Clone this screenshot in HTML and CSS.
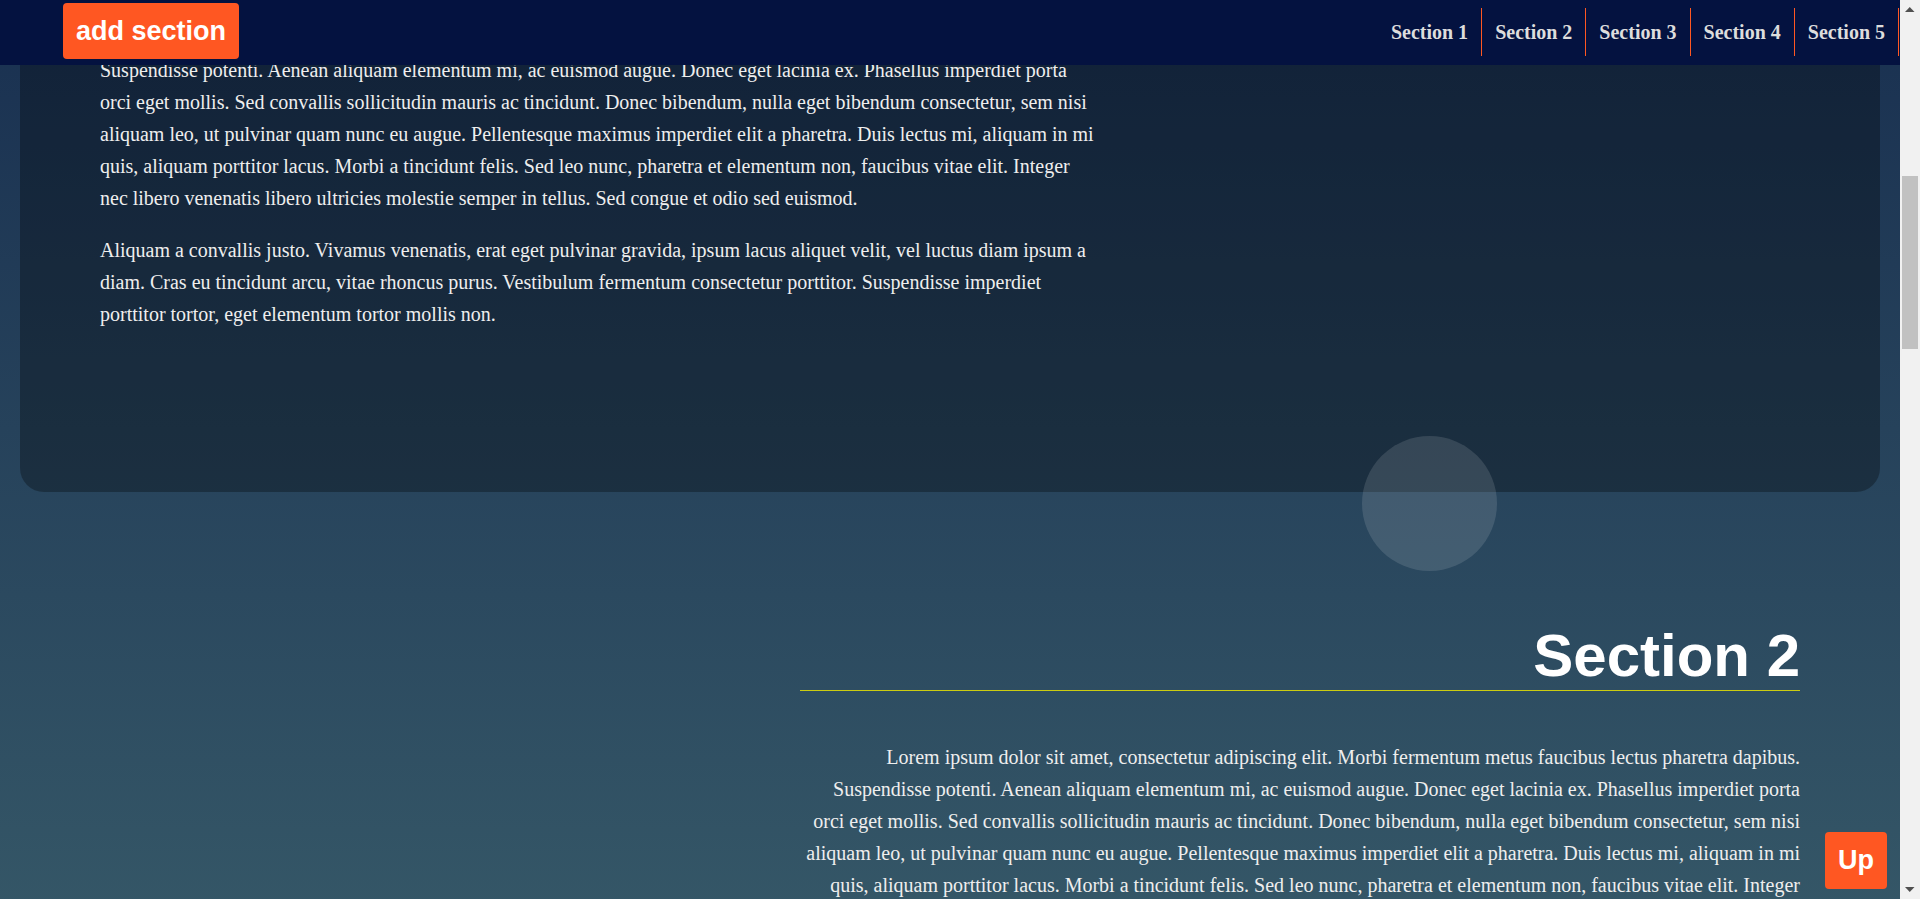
FILE: index.html
```html
<!DOCTYPE html>
<html lang="en">
<head>
<meta charset="utf-8">
<title>Landing Page</title>
<link rel="stylesheet" href="styles.css">
</head>
<body>
<header class="page-header">
  <button class="add-btn" type="button">add section</button>
  <nav class="navbar">
    <ul class="nav-list">
      <li class="nav-item"><a class="menu-link" href="#section1">Section 1</a></li>
      <li class="nav-item"><a class="menu-link" href="#section2">Section 2</a></li>
      <li class="nav-item"><a class="menu-link" href="#section3">Section 3</a></li>
      <li class="nav-item"><a class="menu-link" href="#section4">Section 4</a></li>
      <li class="nav-item"><a class="menu-link" href="#section5">Section 5</a></li>
    </ul>
  </nav>
</header>
<main class="main">
  <header class="main-hero">
    <h1 class="hero-title">Landing Page</h1>
  </header>
  <section id="section1" class="section section-left section-active">
    <div class="landing-container">
      <h2 class="section-title">Section 1</h2>
      <p class="section-text">Lorem ipsum dolor sit amet, consectetur adipiscing elit. Morbi fermentum metus faucibus lectus pharetra dapibus. Suspendisse potenti. Aenean aliquam elementum mi, ac euismod augue. Donec eget lacinia ex. Phasellus imperdiet porta orci eget mollis. Sed convallis sollicitudin mauris ac tincidunt. Donec bibendum, nulla eget bibendum consectetur, sem nisi aliquam leo, ut pulvinar quam nunc eu augue. Pellentesque maximus imperdiet elit a pharetra. Duis lectus mi, aliquam in mi quis, aliquam porttitor lacus. Morbi a tincidunt felis. Sed leo nunc, pharetra et elementum non, faucibus vitae elit. Integer nec libero venenatis libero ultricies molestie semper in tellus. Sed congue et odio sed euismod.</p>
      <p class="section-text">Aliquam a convallis justo. Vivamus venenatis, erat eget pulvinar gravida, ipsum lacus aliquet velit, vel luctus diam ipsum a diam. Cras eu tincidunt arcu, vitae rhoncus purus. Vestibulum fermentum consectetur porttitor. Suspendisse imperdiet porttitor tortor, eget elementum tortor mollis non.</p>
    </div>
    <span class="bubble"></span>
  </section>
  <section id="section2" class="section section-right">
    <div class="landing-container">
      <h2 class="section-title">Section 2</h2>
      <p class="section-text">Lorem ipsum dolor sit amet, consectetur adipiscing elit. Morbi fermentum metus faucibus lectus pharetra dapibus. Suspendisse potenti. Aenean aliquam elementum mi, ac euismod augue. Donec eget lacinia ex. Phasellus imperdiet porta orci eget mollis. Sed convallis sollicitudin mauris ac tincidunt. Donec bibendum, nulla eget bibendum consectetur, sem nisi aliquam leo, ut pulvinar quam nunc eu augue. Pellentesque maximus imperdiet elit a pharetra. Duis lectus mi, aliquam in mi quis, aliquam porttitor lacus. Morbi a tincidunt felis. Sed leo nunc, pharetra et elementum non, faucibus vitae elit. Integer nec libero venenatis libero ultricies molestie semper in tellus. Sed congue et odio sed euismod.</p>
      <p class="section-text">Aliquam a convallis justo. Vivamus venenatis, erat eget pulvinar gravida, ipsum lacus aliquet velit, vel luctus diam ipsum a diam. Cras eu tincidunt arcu, vitae rhoncus purus. Vestibulum fermentum consectetur porttitor. Suspendisse imperdiet porttitor tortor, eget elementum tortor mollis non.</p>
    </div>
  </section>
  <section id="section3" class="section section-left">
    <div class="landing-container">
      <h2 class="section-title">Section 3</h2>
      <p class="section-text">Lorem ipsum dolor sit amet, consectetur adipiscing elit. Morbi fermentum metus faucibus lectus pharetra dapibus. Suspendisse potenti. Aenean aliquam elementum mi, ac euismod augue. Donec eget lacinia ex. Phasellus imperdiet porta orci eget mollis. Sed convallis sollicitudin mauris ac tincidunt. Donec bibendum, nulla eget bibendum consectetur, sem nisi aliquam leo, ut pulvinar quam nunc eu augue. Pellentesque maximus imperdiet elit a pharetra. Duis lectus mi, aliquam in mi quis, aliquam porttitor lacus. Morbi a tincidunt felis. Sed leo nunc, pharetra et elementum non, faucibus vitae elit. Integer nec libero venenatis libero ultricies molestie semper in tellus. Sed congue et odio sed euismod.</p>
      <p class="section-text">Aliquam a convallis justo. Vivamus venenatis, erat eget pulvinar gravida, ipsum lacus aliquet velit, vel luctus diam ipsum a diam. Cras eu tincidunt arcu, vitae rhoncus purus. Vestibulum fermentum consectetur porttitor. Suspendisse imperdiet porttitor tortor, eget elementum tortor mollis non.</p>
    </div>
  </section>
  <section id="section4" class="section section-right">
    <div class="landing-container">
      <h2 class="section-title">Section 4</h2>
      <p class="section-text">Lorem ipsum dolor sit amet, consectetur adipiscing elit. Morbi fermentum metus faucibus lectus pharetra dapibus. Suspendisse potenti. Aenean aliquam elementum mi, ac euismod augue. Donec eget lacinia ex. Phasellus imperdiet porta orci eget mollis. Sed convallis sollicitudin mauris ac tincidunt. Donec bibendum, nulla eget bibendum consectetur, sem nisi aliquam leo, ut pulvinar quam nunc eu augue. Pellentesque maximus imperdiet elit a pharetra. Duis lectus mi, aliquam in mi quis, aliquam porttitor lacus. Morbi a tincidunt felis. Sed leo nunc, pharetra et elementum non, faucibus vitae elit. Integer nec libero venenatis libero ultricies molestie semper in tellus. Sed congue et odio sed euismod.</p>
      <p class="section-text">Aliquam a convallis justo. Vivamus venenatis, erat eget pulvinar gravida, ipsum lacus aliquet velit, vel luctus diam ipsum a diam. Cras eu tincidunt arcu, vitae rhoncus purus. Vestibulum fermentum consectetur porttitor. Suspendisse imperdiet porttitor tortor, eget elementum tortor mollis non.</p>
    </div>
  </section>
  <section id="section5" class="section section-left">
    <div class="landing-container">
      <h2 class="section-title">Section 5</h2>
      <p class="section-text">Lorem ipsum dolor sit amet, consectetur adipiscing elit. Morbi fermentum metus faucibus lectus pharetra dapibus. Suspendisse potenti. Aenean aliquam elementum mi, ac euismod augue. Donec eget lacinia ex. Phasellus imperdiet porta orci eget mollis. Sed convallis sollicitudin mauris ac tincidunt. Donec bibendum, nulla eget bibendum consectetur, sem nisi aliquam leo, ut pulvinar quam nunc eu augue. Pellentesque maximus imperdiet elit a pharetra. Duis lectus mi, aliquam in mi quis, aliquam porttitor lacus. Morbi a tincidunt felis. Sed leo nunc, pharetra et elementum non, faucibus vitae elit. Integer nec libero venenatis libero ultricies molestie semper in tellus. Sed congue et odio sed euismod.</p>
      <p class="section-text">Aliquam a convallis justo. Vivamus venenatis, erat eget pulvinar gravida, ipsum lacus aliquet velit, vel luctus diam ipsum a diam. Cras eu tincidunt arcu, vitae rhoncus purus. Vestibulum fermentum consectetur porttitor. Suspendisse imperdiet porttitor tortor, eget elementum tortor mollis non.</p>
    </div>
  </section>
</main>
<footer class="page-footer">
  <p class="footer-text">&copy; Landing Page</p>
</footer>
<a class="up-btn" href="#">Up</a>
<div class="scrollbar" aria-hidden="true">
  <svg class="scroll-arrow" width="20" height="17" viewBox="0 0 20 17"><polygon points="5,12 14.5,12 9.75,7" fill="#505050"/></svg>
  <div class="scroll-track"><div class="scroll-thumb"></div></div>
  <svg class="scroll-arrow" width="20" height="17" viewBox="0 0 20 17"><polygon points="5,5 14.5,5 9.75,10" fill="#505050"/></svg>
</div>
<script src="script.js"></script>
</body>
</html>
```
FILE: styles.css
```css
html {
  scroll-behavior: auto;
}

body {
  margin: 0 20px 0 0;
  font-family: "Liberation Serif", "Times New Roman", serif;
  font-size: 20px;
  color: #fff;
  background: rgb(136, 203, 171);
  background: linear-gradient(0deg, rgba(136, 203, 171, 1) 0%, rgba(0, 13, 60, 1) 100%);
}

/* fixed top bar */
.page-header {
  position: fixed;
  top: 0;
  left: 0;
  right: 20px;
  height: 65px;
  padding: 0 1px 0 63px;
  background: #041240;
  display: flex;
  align-items: flex-start;
  justify-content: space-between;
  z-index: 5;
}

.add-btn {
  margin-top: 3px;
  padding: 12px 13px;
  border: 0;
  border-radius: 4px;
  background: #ff5722;
  color: #fff;
  font-family: "Liberation Sans", Arial, sans-serif;
  font-weight: bold;
  font-size: 27px;
  line-height: 32px;
  cursor: pointer;
}

.navbar {
  display: flex;
}

.nav-list {
  list-style: none;
  margin: 8px 0 0;
  padding: 0;
  display: flex;
}

.menu-link {
  display: block;
  height: 48px;
  line-height: 48px;
  padding: 0 13px;
  border-right: 1px solid #ff5722;
  color: #ddd;
  font-weight: bold;
  font-size: 20px;
  text-decoration: none;
}

/* page content */
.main {
  margin: 10vh 20px;
}

.main-hero {
  height: 508.6px;
  display: flex;
  align-items: center;
}

.hero-title {
  margin: 0 4rem;
  font-family: "Liberation Sans", Arial, sans-serif;
  font-size: 7em;
}

.section {
  position: relative;
  min-height: 80vh;
}

.section-active {
  background: rgba(0, 0, 0, 0.3);
  border-radius: 24px;
}

.landing-container {
  max-width: 1000px;
  padding: 80px;
}

.section-right .landing-container {
  margin-left: auto;
  text-align: right;
}

.section-title {
  margin: 0.83em 0;
  border-bottom: 1px solid #cc1;
  color: #fff;
  font-family: "Liberation Sans", Arial, sans-serif;
  font-weight: bold;
  font-size: 3em;
}

.section-text {
  margin: 1em 0;
  line-height: 1.6em;
  color: #eee;
}

.bubble {
  position: absolute;
  right: 383px;
  bottom: -79px;
  width: 135px;
  height: 135px;
  border-radius: 50%;
  background: rgba(255, 255, 255, 0.12);
}

.page-footer {
  padding: 70px 60px;
  background: #000;
  color: #fff;
}

.footer-text {
  margin: 1em 0;
  line-height: 1.6em;
}

.up-btn {
  position: fixed;
  right: 33px;
  bottom: 10px;
  padding: 12px 13px;
  border-radius: 4px;
  background: #ff5722;
  color: #fff;
  font-family: "Liberation Sans", Arial, sans-serif;
  font-weight: bold;
  font-size: 27px;
  line-height: 33px;
  text-decoration: none;
  z-index: 6;
}

/* window scrollbar */
.scrollbar {
  position: fixed;
  top: 0;
  right: 0;
  bottom: 0;
  width: 20px;
  background: #f1f1f1;
  display: flex;
  flex-direction: column;
  z-index: 10;
}

.scroll-arrow {
  display: block;
  flex: none;
}

.scroll-track {
  flex: 1;
  padding-top: 159px;
}

.scroll-thumb {
  margin-left: 2px;
  width: 16px;
  height: 173px;
  background: #c1c1c1;
}
```
FILE: script.js
```js
(function () {
  if ('scrollRestoration' in history) {
    history.scrollRestoration = 'manual';
  }
  function place() {
    var s2 = document.getElementById('section2');
    var y = s2.getBoundingClientRect().top + window.scrollY - 491.7;
    window.scrollTo(0, y);
  }
  place();
  window.addEventListener('load', place);
})();
```
